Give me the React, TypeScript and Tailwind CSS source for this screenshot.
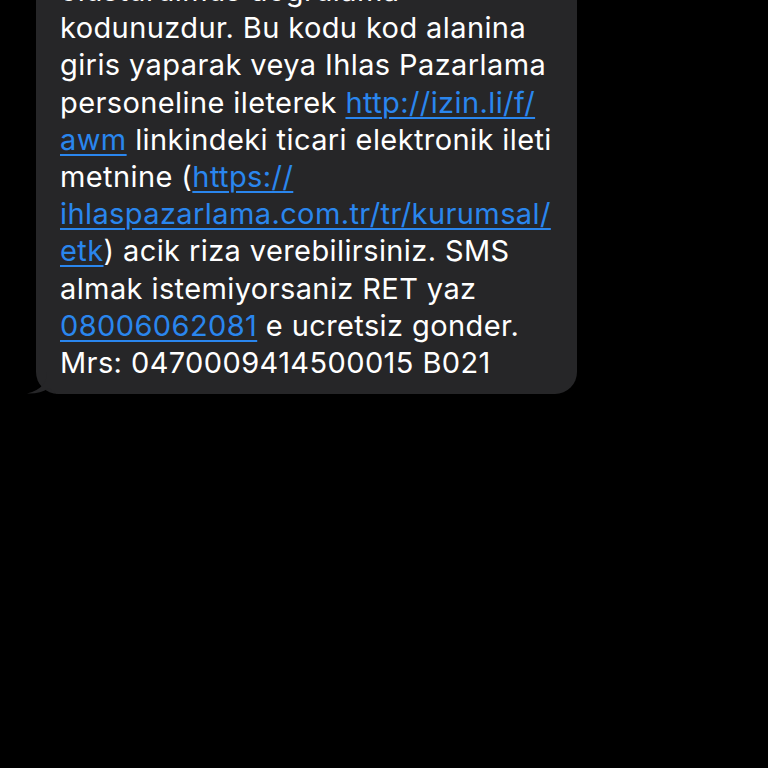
import React from 'react'

const Link = ({ children }: { children: React.ReactNode }) => (
  <span className="text-[#2a86ee] underline decoration-[1.5px] underline-offset-[4px]">{children}</span>
)

export default function App() {
  const lines: React.ReactNode[] = [
    'olusturulmus dogrulama',
    'kodunuzdur. Bu kodu kod alanina',
    'giris yaparak veya Ihlas Pazarlama',
    <>personeline ileterek <Link>http://izin.li/f/</Link></>,
    <><Link>awm</Link> linkindeki ticari elektronik ileti</>,
    <>metnine (<Link>https://</Link></>,
    <Link>ihlaspazarlama.com.tr/tr/kurumsal/</Link>,
    <><Link>etk</Link>) acik riza verebilirsiniz. SMS</>,
    'almak istemiyorsaniz RET yaz',
    <><Link>08006062081</Link> e ucretsiz gonder.</>,
    'Mrs: 0470009414500015 B021',
  ]

  return (
    <div className="min-h-screen w-full bg-black overflow-hidden" style={{ fontFamily: 'Inter, "Noto Sans", sans-serif' }}>
      <div className="pl-[36px] -mt-[28px]">
        <div className="relative w-[541px]">
          <div className="bg-[#262628] rounded-[22px] pl-[24px] pr-4 pt-[0px] pb-[13px] text-white text-[29px] leading-[37.2px] tracking-[0.4px]">
            {lines.map((l, i) => (
              <div key={i} className="whitespace-nowrap">{l}</div>
            ))}
          </div>
          <svg className="absolute -left-[9px] bottom-0" width="30" height="22" viewBox="0 0 30 22">
            <path d="M20 0 C20 10 15 18 0 21.5 C8 22 16 20 22 16 L30 22 L30 0 Z" fill="#262628" />
          </svg>
        </div>
      </div>
    </div>
  )
}
